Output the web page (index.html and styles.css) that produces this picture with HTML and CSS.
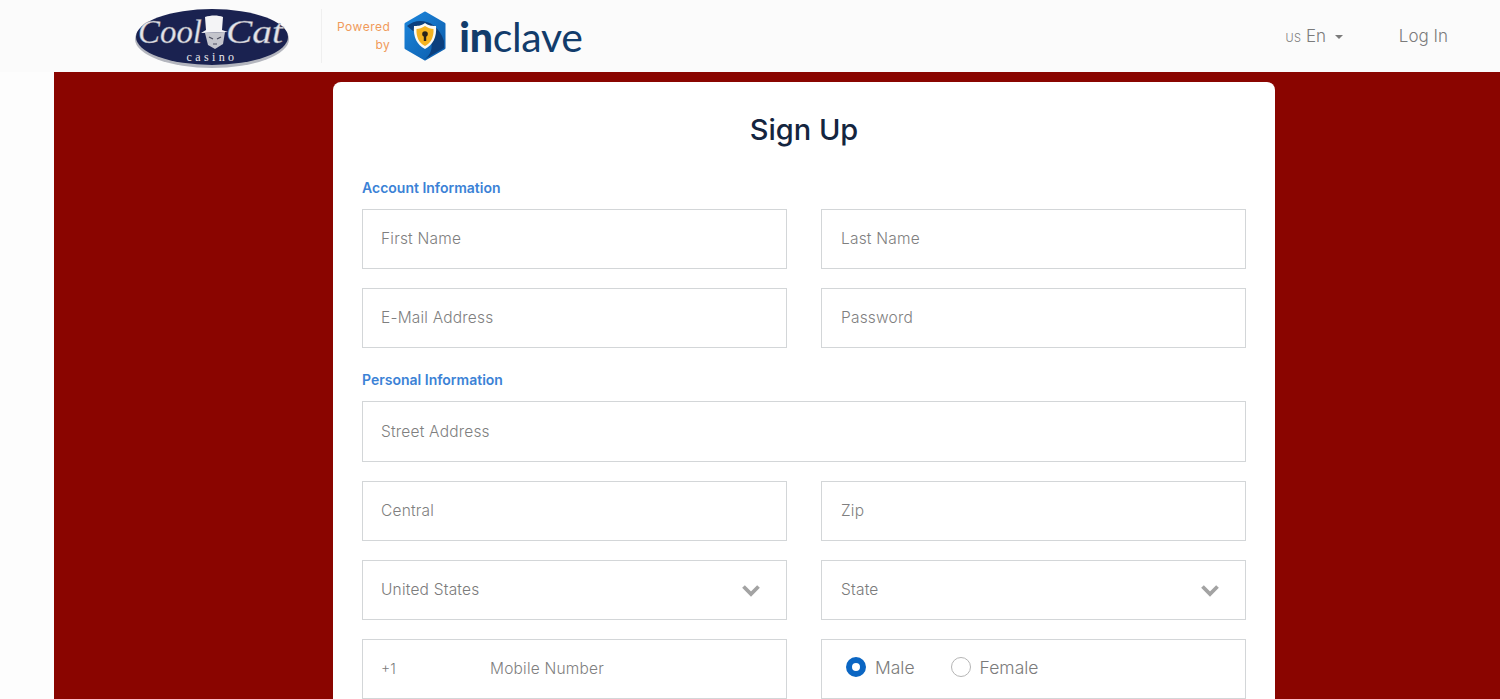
FILE: index.html
```html
<!DOCTYPE html>
<html lang="en">
<head>
    <meta charset="UTF-8">
    <meta name="viewport" content="width=device-width, initial-scale=1.0">
    <title>Sign Up</title>
    <link rel="stylesheet" href="styles.css">
</head>
<body>
    <header class="topbar">
        <div class="brand">
            <svg class="casino-logo" width="158" height="62" viewBox="0 0 158 62">
                <ellipse cx="79" cy="32" rx="77" ry="29" fill="#b4b6be"/>
                <ellipse cx="79" cy="30" rx="76" ry="28" fill="#1a2250"/>
                <path d="M72 10 C78 8 85 8 90 10 L89 23 L95 25 L68 26 L73 23 Z" fill="#f4f4f6"/>
                <path d="M72 26 L92 25 L90 37 L82 42 L75 38 Z" fill="#c4c5cc"/>
                <path d="M76 30 L80 32 M88 30 L84 32 M80 37 L84 37" stroke="#4a4c5e" stroke-width="1.200"/>
                <text class="logo-script" x="5" y="36" textLength="64" lengthAdjust="spacingAndGlyphs">Cool</text>
                <text class="logo-script" x="93" y="36" textLength="57" lengthAdjust="spacingAndGlyphs">Cat</text>
                <text class="logo-small" x="79" y="54" text-anchor="middle">casino</text>
            </svg>
            <div class="powered">Powered<br>by</div>
            <div class="inclave">
                <svg width="44" height="50" viewBox="0 0 44 50">
                    <defs>
                        <linearGradient id="hexBlue" x1="0" y1="0" x2="1" y2="1">
                            <stop offset="0" stop-color="#1c86dc"/>
                            <stop offset="1" stop-color="#0c5cab"/>
                        </linearGradient>
                    </defs>
                    <path d="M22 2 L41 13 L41 37 L22 48 L3 37 L3 13 Z" fill="url(#hexBlue)" stroke="url(#hexBlue)" stroke-width="3" stroke-linejoin="round"/>
                    <path d="M4 15 C14 6 34 8 41 30 L41 37 L22 48 C34 40 30 18 10 20 Z" fill="#0b3f7d"/>
                    <path d="M22 12 C26 15 30 15 33 15 C34 26 30 34 22 38 C14 34 10 26 11 15 C14 15 18 15 22 12 Z" fill="#f9f9f4"/>
                    <path d="M22 15 C25 17 28 18 30.500 18 C31 26 28 32 22 35 C16 32 13 26 13.500 18 C16 18 19 17 22 15 Z" fill="#f4b321"/>
                    <circle cx="22" cy="23" r="2.800" fill="#27221a"/>
                    <rect x="20.800" y="24" width="2.400" height="6" fill="#27221a"/>
                </svg>
                <span class="inclave-name"><b>in</b>clave</span>
            </div>
        </div>
        <nav class="topnav">
            <span class="lang"><small>US</small> En <i class="caret"></i></span>
            <a class="login" href="#">Log In</a>
        </nav>
    </header>

    <main class="backdrop">
        <form class="card">
            <h1>Sign Up</h1>

            <h2 class="section first">Account Information</h2>
            <div class="row">
                <input type="text" placeholder="First Name">
                <input type="text" placeholder="Last Name">
            </div>
            <div class="row">
                <input type="text" placeholder="E-Mail Address">
                <input type="password" placeholder="Password">
            </div>

            <h2 class="section">Personal Information</h2>
            <div class="row single">
                <input class="tall" type="text" placeholder="Street Address">
            </div>
            <div class="row">
                <input type="text" placeholder="Central">
                <input type="text" placeholder="Zip">
            </div>
            <div class="row">
                <div class="select-box">
                    <select><option>United States</option></select>
                    <svg class="chevron" width="20" height="13" viewBox="0 0 20 13"><path d="M2.500 2.500 L10 10 L17.500 2.500" fill="none" stroke="#a3a3a3" stroke-width="3.800"/></svg>
                </div>
                <div class="select-box">
                    <select><option>State</option></select>
                    <svg class="chevron" width="20" height="13" viewBox="0 0 20 13"><path d="M2.500 2.500 L10 10 L17.500 2.500" fill="none" stroke="#a3a3a3" stroke-width="3.800"/></svg>
                </div>
            </div>
            <div class="row">
                <div class="phone">
                    <span class="dial">+1</span>
                    <input type="tel" placeholder="Mobile Number">
                </div>
                <div class="gender">
                    <label><input type="radio" name="gender" checked> Male</label>
                    <label><input type="radio" name="gender"> Female</label>
                </div>
            </div>
        </form>
    </main>
</body>
</html>
```

FILE: styles.css
```css
* {
    box-sizing: border-box;
}
html, body {
    height: 100%;
}
body {
    margin: 0;
    height: 699px;
    overflow: hidden;
    background: #fdfdfd;
    font-family: "Inter", "Open Sans", sans-serif;
    color: #7b7b7b;
}
.topbar {
    height: 72px;
    background: #fbfbfb;
    display: flex;
    align-items: center;
    justify-content: space-between;
    padding: 0 52px 0 133px;
}
.brand {
    display: flex;
    align-items: center;
}
.casino-logo {
    margin: 3px 30px 0 0;
}
.logo-script {
    font-family: "Liberation Serif", serif;
    font-style: italic;
    font-size: 33px;
    fill: #e4e4ea;
    stroke: #8b8d9a;
    stroke-width: 0.4px;
}
.logo-small {
    font-family: "Liberation Serif", serif;
    font-size: 12px;
    letter-spacing: 3.400px;
    fill: #e8e8ec;
}
.powered {
    height: 54px;
    padding: 9px 13px 0 15px;
    border-left: 1px solid #efefef;
    text-align: right;
    font-size: 12px;
    letter-spacing: 0.500px;
    line-height: 18px;
    color: #f09a5a;
}
.inclave {
    display: flex;
    align-items: center;
    gap: 12px;
}
.inclave-name {
    font-family: "Lato", sans-serif;
    font-size: 41px;
    letter-spacing: -0.300px;
    color: #123c6b;
}
.inclave-name b {
    font-weight: 900;
}
.topnav {
    display: flex;
    align-items: center;
    gap: 56px;
    font-size: 17px;
    font-weight: 300;
}
.lang small {
    font-size: 11px;
    letter-spacing: 0.300px;
}
.caret {
    display: inline-block;
    margin-left: 4px;
    vertical-align: 3px;
    border-top: 4px solid #7b7b7b;
    border-left: 4.500px solid transparent;
    border-right: 4.500px solid transparent;
}
.login {
    color: #7b7b7b;
    text-decoration: none;
}
.backdrop {
    margin-left: 54px;
    height: 627px;
    padding: 10px 225px 0 279px;
    background: #8a0500;
    overflow: hidden;
}
.card {
    background: #fff;
    border-radius: 8px 8px 0 0;
    padding: 29px 29px 0;
    height: 640px;
}
.card h1 {
    margin: 0;
    text-align: center;
    font-size: 29px;
    line-height: 38px;
    font-weight: 500;
    color: #14253f;
}
.section {
    margin: 23px 0 12px;
    font-size: 14px;
    line-height: 18px;
    font-weight: 600;
    color: #3b82d6;
}
.section.first {
    margin-top: 30px;
}
.row {
    display: grid;
    grid-template-columns: 425px 425px;
    column-gap: 34px;
    margin-bottom: 19px;
}
.row.single {
    grid-template-columns: 1fr;
}
input, select {
    font-family: inherit;
    font-size: 15.500px;
    font-weight: 300;
    letter-spacing: 0.200px;
    color: #7b7b7b;
}
input::placeholder {
    color: #7f7f7f;
    opacity: 1;
}
.row > input {
    height: 60px;
    padding: 0 19px 2px 18px;
    border: 1px solid #d3d6d8;
    background: #fff;
}
.row > input:nth-child(2) {
    padding-left: 19px;
}
.row > input.tall {
    height: 61px;
    padding-bottom: 0;
}
.select-box {
    position: relative;
}
.select-box select {
    display: block;
    width: 100%;
    height: 60px;
    padding: 0 19px 2px 18px;
    border: 1px solid #d3d6d8;
    border-radius: 0;
    background: #fff;
    appearance: none;
}
.select-box:nth-child(2) select {
    padding-left: 19px;
}
.chevron {
    position: absolute;
    right: 26px;
    top: 24px;
}
.phone {
    height: 60px;
    display: flex;
    align-items: center;
    padding: 0 0 2px 18px;
    border: 1px solid #d3d6d8;
}
.dial {
    width: 109px;
    font-size: 14px;
    font-weight: 300;
}
.phone input {
    border: 0;
    padding: 0;
    outline: 0;
    flex: 1;
}
.gender {
    height: 60px;
    display: flex;
    align-items: center;
    gap: 36px;
    padding: 0 0 4px 24px;
    border: 1px solid #d3d6d8;
    font-size: 17.500px;
    font-weight: 300;
}
.gender label {
    display: flex;
    align-items: center;
    gap: 9px;
}
.gender input {
    appearance: none;
    margin: 0;
    width: 20px;
    height: 20px;
    border-radius: 50%;
    border: 1px solid #b5b5b5;
    background: #fff;
}
.gender input:checked {
    border: 6px solid #0b66c3;
}
```
